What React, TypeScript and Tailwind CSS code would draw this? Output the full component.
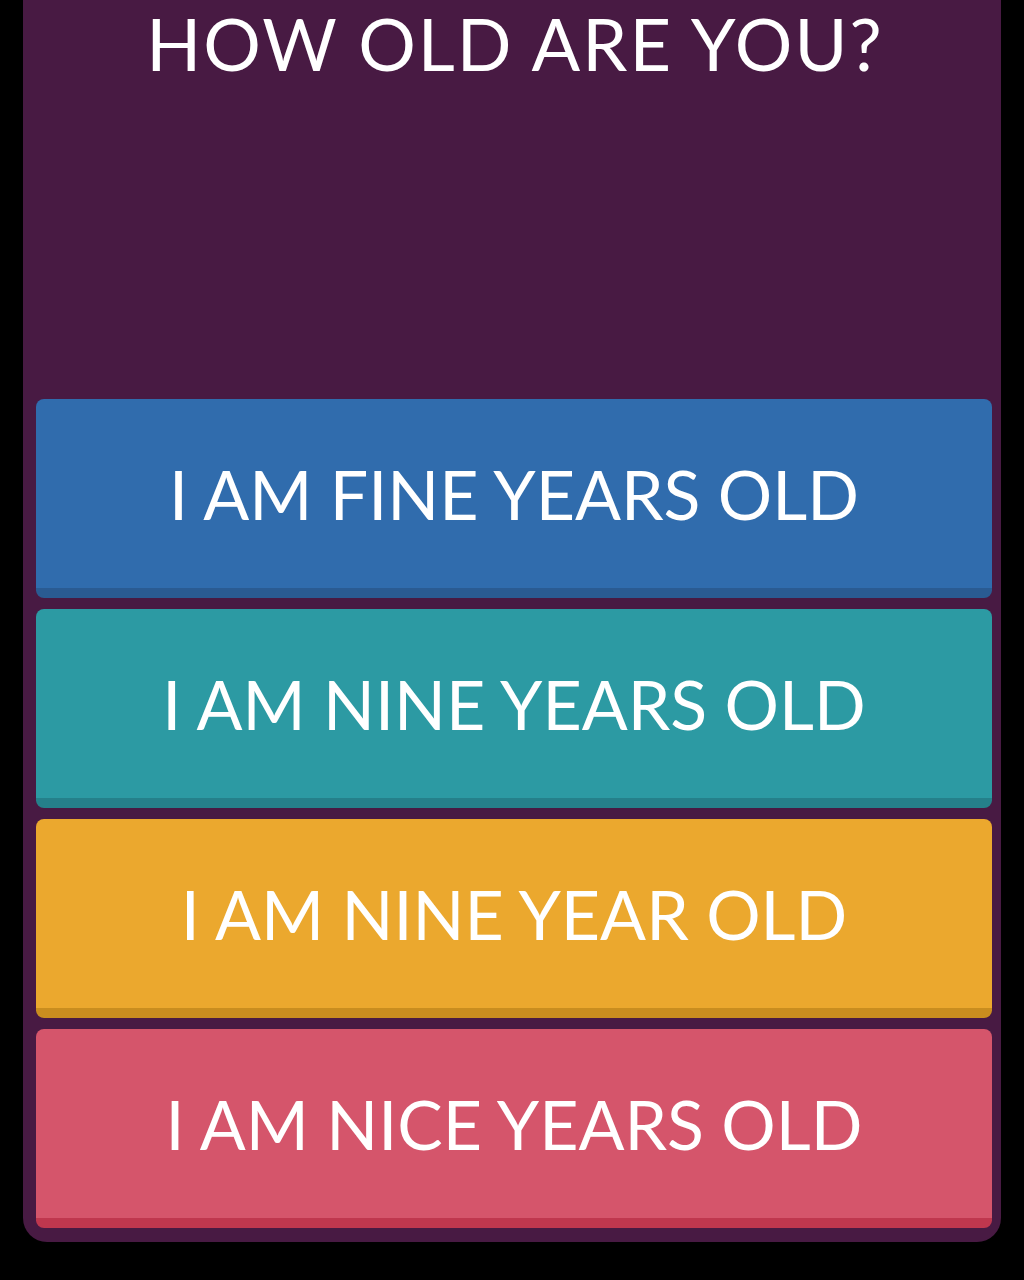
const answers = [
  { label: 'I AM FINE YEARS OLD', face: 'bg-[#306cad]', edge: 'border-[#2a5b92]' },
  { label: 'I AM NINE YEARS OLD', face: 'bg-[#2c9aa3]', edge: 'border-[#25808a]' },
  { label: 'I AM NINE YEAR OLD', face: 'bg-[#eba82e]', edge: 'border-[#c98d1f]' },
  { label: 'I AM NICE YEARS OLD', face: 'bg-[#d5556b]', edge: 'border-[#bf374e]' },
];

export default function App() {
  return (
    <div className="h-[1280px] w-[1024px] bg-black pl-[23px] pr-[23px] font-['Lato','Noto_Sans',sans-serif] text-white">
      <div className="flex h-[1242px] flex-col rounded-b-[24px] bg-[#481a43] pl-[13px] pr-[9px] pb-[14px]">
        {/* Question */}
        <h1 className="pt-[3px] pl-[2px] text-center text-[72px] leading-[80px] font-normal tracking-[2px]">
          HOW OLD ARE YOU?
        </h1>

        <div className="flex-1" />

        {/* Answers */}
        <div className="flex flex-col gap-[11px]">
          {answers.map((a) => (
            <button
              key={a.label}
              className={`flex h-[199px] w-full items-center justify-center rounded-[8px] border-b-[10px] ${a.face} ${a.edge} text-[68px] font-normal text-white`}
            >
              {a.label}
            </button>
          ))}
        </div>
      </div>
    </div>
  );
}
